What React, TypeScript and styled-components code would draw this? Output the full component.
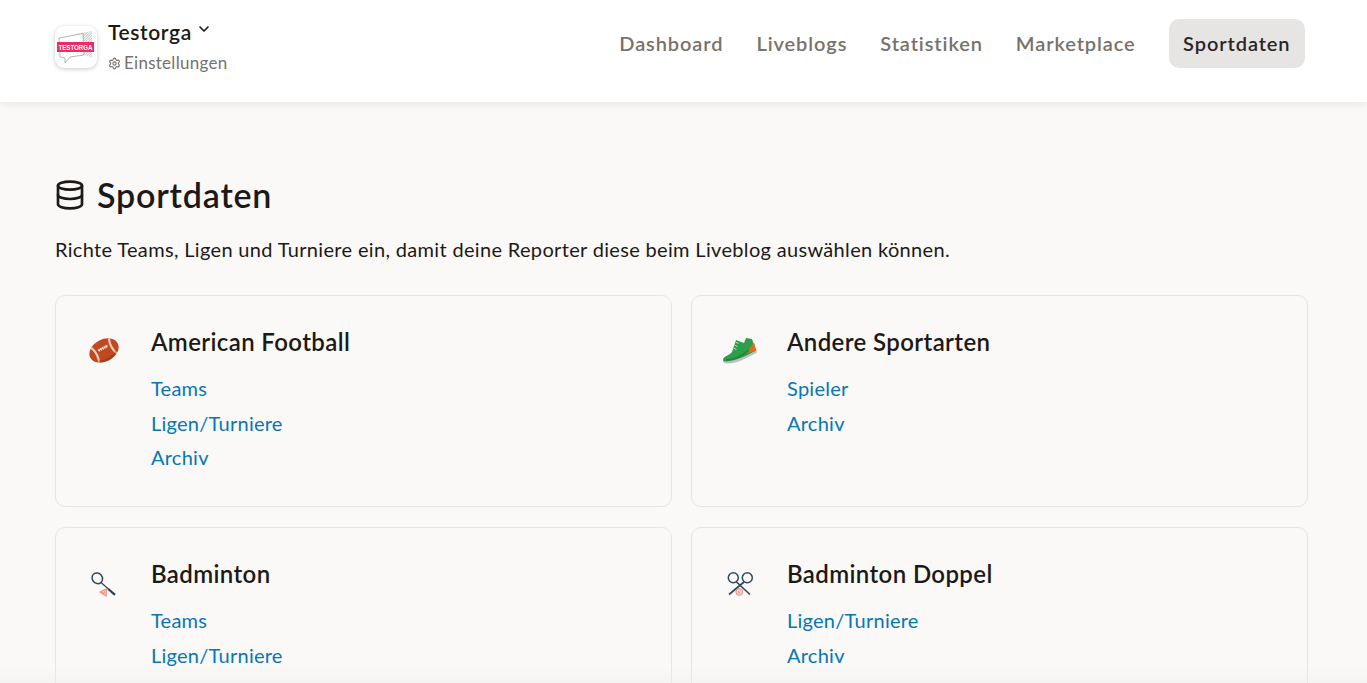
import React from "react";
import styled, { createGlobalStyle } from "styled-components";
import { ChevronDown, Database, Settings } from "lucide-react";

const Global = createGlobalStyle`
  html, body { margin: 0; padding: 0; height: 100%; overflow: hidden; background: #faf9f7; }
  body { font-family: "Lato", "Liberation Sans", sans-serif; color: #1c1917; }
  * { box-sizing: border-box; }
`;

const Page = styled.div`
  position: relative;
  height: 683px;
  overflow: hidden;
`;

const Header = styled.header`
  height: 102px;
  background: #fff;
  box-shadow: 0 2px 8px rgba(0, 0, 0, 0.08);
  display: flex;
  align-items: flex-start;
  justify-content: space-between;
  padding: 19px 62px 0 55px;
  position: relative;
`;

const Org = styled.div`
  display: flex;
  align-items: flex-start;
  gap: 11px;
`;

const LogoBox = styled.div`
  width: 42px;
  height: 42px;
  border-radius: 9px;
  background: #fff;
  box-shadow: 0 1px 4px rgba(0, 0, 0, 0.22);
  overflow: hidden;
  margin-top: 7px;
`;

const OrgText = styled.div`
  display: flex;
  flex-direction: column;
  gap: 7px;
`;

const OrgName = styled.div`
  display: flex;
  align-items: flex-start;
  gap: 4px;
  font-size: 21px;
  line-height: 26px;
  font-weight: 600;
  letter-spacing: 0.6px;
  color: #1c1917;
  svg { margin-top: 2px; }
`;

const SettingsLink = styled.div`
  display: flex;
  align-items: center;
  gap: 3px;
  font-size: 17px;
  line-height: 22px;
  letter-spacing: 0.27px;
  color: #78716c;
`;

const Nav = styled.nav`
  display: flex;
  align-items: center;
  gap: 33px;
`;

const NavItem = styled.a<{ $active?: boolean }>`
  display: block;
  height: 49px;
  line-height: 49px;
  padding: 0 ${(p) => (p.$active ? "14.5px" : "0")};
  border-radius: 10px;
  font-size: 20px;
  font-weight: 600;
  letter-spacing: 0.9px;
  color: ${(p) => (p.$active ? "#292524" : "#78716c")};
  background: ${(p) => (p.$active ? "#e7e5e4" : "transparent")};
`;

const Main = styled.main`
  padding: 72px 59px 0 55px;
`;

const TitleRow = styled.div`
  display: flex;
  align-items: center;
  gap: 11px;
  height: 42px;
  svg { margin-left: -1px; }
`;

const Title = styled.h1`
  margin: 0;
  font-size: 34px;
  line-height: 42px;
  font-weight: 600;
  letter-spacing: 0.8px;
  color: #1c1917;
`;

const Intro = styled.p`
  margin: 19px 0 0;
  font-size: 20px;
  line-height: 28px;
  letter-spacing: 0.33px;
  color: #1c1917;
`;

const Grid = styled.div`
  display: grid;
  grid-template-columns: 617px 617px;
  column-gap: 19px;
  row-gap: 20px;
  margin-top: 32px;
`;

const Card = styled.section`
  display: flex;
  height: 212px;
  border: 1px solid #e7e5e4;
  border-radius: 10px;
  background: #faf9f7;
  padding: 30px 30px 0 30px;
`;

const IconSlot = styled.div`
  width: 65px;
  flex: none;
  padding-top: 6px;
  svg { display: block; }
`;

const CardBody = styled.div`
  display: flex;
  flex-direction: column;
`;

const CardTitle = styled.h2`
  margin: 0 0 13px;
  font-size: 24px;
  line-height: 32px;
  font-weight: 600;
  letter-spacing: 0.38px;
  color: #1c1917;
`;

const CardLink = styled.a`
  display: block;
  font-size: 20px;
  line-height: 34.5px;
  letter-spacing: 0.25px;
  color: #0477b5;
`;

const BottomFade = styled.div`
  position: absolute;
  left: 0;
  right: 0;
  bottom: 0;
  height: 18px;
  background: linear-gradient(to bottom, rgba(240, 238, 236, 0), rgba(240, 238, 236, 0.45));
  pointer-events: none;
`;

const Logo = () => (
  <svg width="42" height="42" viewBox="0 0 42 42">
    <defs>
      <pattern id="hatch" width="1.8" height="1.8" patternUnits="userSpaceOnUse" patternTransform="rotate(45)">
        <line x1="0" y1="0" x2="0" y2="1.8" stroke="#777" strokeWidth="0.8" />
      </pattern>
    </defs>
    <path d="M20 8 L37 5 V31 L24 28 Z" fill="url(#hatch)" />
    <path d="M4 12 L28 7.5 L29 29 L15 31 L10 37 L10 32 L5 31 Z" fill="#fff" stroke="#a3a3a3" strokeWidth="0.8" />
    <rect x="2" y="16" width="37" height="10" fill="#ea2e63" />
    <text x="20.5" y="24" textAnchor="middle" fontFamily="Liberation Sans" fontSize="8" fontWeight="700" fill="#fff" textLength="34" lengthAdjust="spacingAndGlyphs">TESTORGA</text>
  </svg>
);

const Football = () => (
  <svg width="36" height="36" viewBox="0 0 36 36">
    <g transform="rotate(-28 18 18.5)">
      <ellipse cx="18" cy="18.5" rx="15.5" ry="11" fill="#bf4a21" />
      <path d="M8 10.2 Q11.5 18.5 8 26.8" fill="none" stroke="#f9cdb9" strokeWidth="2.2" />
      <path d="M28 10.2 Q24.5 18.5 28 26.8" fill="none" stroke="#f9cdb9" strokeWidth="2.2" />
      <path d="M12.5 16 H23.5" stroke="#f3e3da" strokeWidth="1" />
      <path d="M14 14.5V17.5M16 14.5V17.5M18 14.5V17.5M20 14.5V17.5M22 14.5V17.5" stroke="#f3e3da" strokeWidth="1" />
      <path d="M5 23 Q18 31 31 23 Q26 29.5 18 29.5 Q10 29.5 5 23Z" fill="#8f2f14" opacity="0.45" />
    </g>
  </svg>
);

const Shoe = () => (
  <svg width="36" height="36" viewBox="0 0 36 36">
    <path d="M1 28 C1 24 7 24 10 20 L14 8 L22 11 L24 6 L30 7 L34 19 C26 23 15 29 5 30 C2 30 1 30 1 28Z" fill="#2f9e4a" />
    <path d="M24 21.3 L32 10.5 L34.5 19 Z" fill="#ea6a1d" />
    <path d="M1.5 29.5 C12 30 24 24 34.5 19 L35 20.5 C25 26 14 32 5 31.5 C3 31.5 2 30.5 1.5 29.5Z" fill="#b9c0c7" />
    <path d="M11.5 16l3 1.5M12.5 13l3 1.5M13.5 10l3 1.5" stroke="#b7e0c0" strokeWidth="1" />
    <path d="M4 28 C12 28 20 24 27 18" fill="none" stroke="#1f7f37" strokeWidth="1.4" />
  </svg>
);

const Racket = () => (
  <svg width="36" height="36" viewBox="0 0 36 36">
    <ellipse cx="11.3" cy="14.3" rx="5" ry="5.6" fill="none" stroke="#33475b" strokeWidth="1.5" transform="rotate(-40 11.3 14.3)" />
    <path d="M15 18.5 L23 25.5" stroke="#33475b" strokeWidth="1.2" />
    <path d="M22.3 25 L29 30.8" stroke="#2c3e50" strokeWidth="2.2" />
    <path d="M20.5 25 L20 32 L14 28 Z" fill="#fbd5cf" stroke="#ee8d82" strokeWidth="1.1" />
    <path d="M18.8 26.5 L17.5 31 M20 29 L15.5 28.5" stroke="#ee8d82" strokeWidth="0.7" />
  </svg>
);

const DoubleRacket = () => (
  <svg width="36" height="36" viewBox="0 0 36 36">
    <circle cx="11.3" cy="13.7" r="5" fill="none" stroke="#33475b" strokeWidth="1.5" />
    <circle cx="25.3" cy="13.7" r="5" fill="none" stroke="#33475b" strokeWidth="1.5" />
    <path d="M14.5 18 L28 30.5" stroke="#33475b" strokeWidth="1.7" />
    <path d="M22 18 L7 30.5" stroke="#33475b" strokeWidth="1.7" />
    <circle cx="17.3" cy="28" r="3.4" fill="#fbd5cf" stroke="#ee8d82" strokeWidth="1" />
    <path d="M16 27 L18.5 30 M18.5 26.5 L16.5 30" stroke="#ee8d82" strokeWidth="0.7" />
  </svg>
);

const sports = [
  { name: "American Football", icon: <Football />, links: ["Teams", "Ligen/Turniere", "Archiv"] },
  { name: "Andere Sportarten", icon: <Shoe />, links: ["Spieler", "Archiv"] },
  { name: "Badminton", icon: <Racket />, links: ["Teams", "Ligen/Turniere", "Archiv"] },
  { name: "Badminton Doppel", icon: <DoubleRacket />, links: ["Ligen/Turniere", "Archiv"] },
];

const navItems = ["Dashboard", "Liveblogs", "Statistiken", "Marketplace"];

export default function App() {
  return (
    <Page>
      <Global />
      <Header>
        <Org>
          <LogoBox><Logo /></LogoBox>
          <OrgText>
            <OrgName>Testorga <ChevronDown size={16} strokeWidth={2.5} /></OrgName>
            <SettingsLink><Settings size={13} />Einstellungen</SettingsLink>
          </OrgText>
        </Org>
        <Nav>
          {navItems.map((n) => <NavItem key={n}>{n}</NavItem>)}
          <NavItem $active>Sportdaten</NavItem>
        </Nav>
      </Header>
      <Main>
        <TitleRow>
          <Database size={32} strokeWidth={2} />
          <Title>Sportdaten</Title>
        </TitleRow>
        <Intro>Richte Teams, Ligen und Turniere ein, damit deine Reporter diese beim Liveblog auswählen können.</Intro>
        <Grid>
          {sports.map((s) => (
            <Card key={s.name}>
              <IconSlot>{s.icon}</IconSlot>
              <CardBody>
                <CardTitle>{s.name}</CardTitle>
                {s.links.map((l) => <CardLink key={l}>{l}</CardLink>)}
              </CardBody>
            </Card>
          ))}
        </Grid>
      </Main>
      <BottomFade />
    </Page>
  );
}
